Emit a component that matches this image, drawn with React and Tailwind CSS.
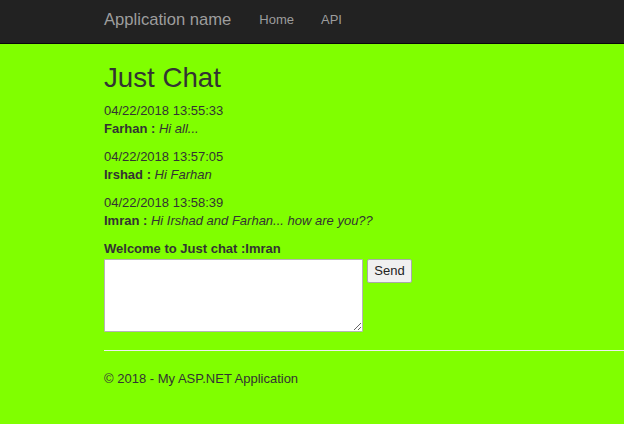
const messages = [
  { date: "04/22/2018 13:55:33", name: "Farhan", text: "Hi all..." },
  { date: "04/22/2018 13:57:05", name: "Irshad", text: "Hi Farhan" },
  { date: "04/22/2018 13:58:39", name: "Imran", text: "Hi Irshad and Farhan... how are you??" },
];

export default function App() {
  return (
    <div className="h-[424px] overflow-hidden bg-[#80ff00] font-['Liberation_Sans',Arial,sans-serif] text-[13px] leading-[18px] text-[#333]">
      <nav className="flex h-11 items-center border-b border-[#080808] bg-[#222] pb-[3px] pl-[104px]">
        <span className="text-[16.6px] text-[#9d9d9d]">Application name</span>
        <span className="ml-7 text-[#9d9d9d]">Home</span>
        <span className="ml-[27px] text-[#9d9d9d]">API</span>
      </nav>
      <main className="pl-[104px]">
        <h2 className="mt-[19px] text-[27.7px] leading-[30px] font-medium">Just Chat</h2>
        <div className="mt-[9px] flex flex-col gap-[10px]">
          {messages.map((m) => (
            <div key={m.date}>
              <div>{m.date}</div>
              <div>
                <b>{m.name} : </b>
                <i>{m.text}</i>
              </div>
            </div>
          ))}
        </div>
        <div className="mt-[10px] font-bold">Welcome to Just chat :Imran</div>
        <div className="mt-px flex items-start">
          <textarea className="h-[73px] w-[259px] rounded-[1px] border border-[#b5b5b5] bg-white" />
          <button className="ml-[4px] h-[24px] w-[45px] rounded-[2px] border border-[#a9a9a9] bg-[#f0f0f0] text-[13px] text-[#222]">
            Send
          </button>
        </div>
        <hr className="mt-[18px] border-t border-[#eee]" />
        <footer className="mt-[19px]">© 2018 - My ASP.NET Application</footer>
      </main>
    </div>
  );
}
